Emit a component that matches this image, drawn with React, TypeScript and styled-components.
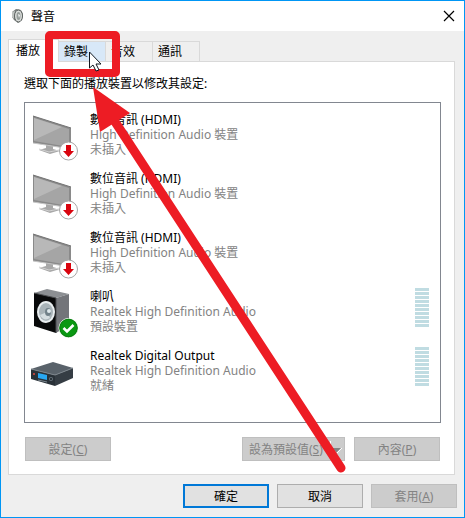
import React from "react";
import styled, { createGlobalStyle, css } from "styled-components";

const GlobalStyle = createGlobalStyle`
  * { box-sizing: border-box; }
  body { margin: 0; background: #efefef; }
  button { font: inherit; color: inherit; }
`;

const Dialog = styled.div`
  position: relative;
  display: flex;
  flex-direction: column;
  min-height: 100vh;
  border: 1px solid #0096f5;
  background: #efefef;
  color: #000;
  font: 12px/15px "Noto Sans", "Noto Sans CJK TC", sans-serif;
`;

const TitleBar = styled.header`
  display: flex;
  align-items: center;
  gap: 7px;
  height: 30px;
  padding: 0 9px 0 10px;
  background: #fff;
`;

const Title = styled.h1`
  flex: 1;
  margin: 0;
  font-size: 12px;
  font-weight: 400;
`;

const CloseButton = styled.button`
  display: flex;
  padding: 0;
  border: 0;
  background: none;
`;

const Content = styled.main`
  display: flex;
  flex: 1;
  flex-direction: column;
  padding: 8px 9px 0 7px;
`;

const TabList = styled.div`
  display: flex;
  align-items: flex-end;
`;

const Tab = styled.button<{ $active?: boolean; $hover?: boolean }>`
  width: 47px;
  height: 20px;
  padding: 0 0 1px 5px;
  border: 1px solid #d9d9d9;
  border-width: 1px 1px 0 0;
  background: ${(p) => (p.$hover ? "#d8e8f8" : "#efefef")};
  text-align: left;
  ${(p) =>
    p.$active &&
    css`
      z-index: 1;
      width: 51px;
      height: 23px;
      margin-bottom: -1px;
      padding: 0 0 2px 7px;
      border-left-width: 1px;
      background: #fff;
    `}
`;

const Panel = styled.section`
  display: flex;
  flex: 1;
  flex-direction: column;
  padding: 14px 13px 13px 15px;
  border: 1px solid #d9d9d9;
  background: #fff;
`;

const Prompt = styled.p`
  margin: 0 0 11px;
`;

const DeviceList = styled.ul`
  flex: 1;
  margin: 0;
  padding: 0 11px 0 5px;
  border: 1px solid #828790;
  list-style: none;
`;

const Device = styled.li`
  display: flex;
  height: 59px;
`;

const DeviceText = styled.div`
  flex: 1;
  padding: 9px 0 0 10px;
  color: #838383;
`;

const DeviceName = styled.div`
  color: #000;
`;

const Meter = styled.div`
  display: flex;
  flex-direction: column;
  gap: 1px;
  width: 14px;
  padding-top: 8px;
`;

const MeterBar = styled.span`
  height: 3px;
  background: #c0dce2;
`;

const Actions = styled.div`
  display: flex;
  gap: 9px;
  padding: 14px 1px 0;
`;

const Footer = styled.footer`
  display: flex;
  justify-content: flex-end;
  gap: 8px;
  padding: 9px 7px;
`;

const Spacer = styled.span`
  flex: 1;
`;

const Button = styled.button<{ $primary?: boolean }>`
  display: flex;
  align-items: center;
  justify-content: center;
  width: 86px;
  height: 24px;
  padding: 0;
  border: ${(p) => (p.$primary ? "2px solid #0078d7" : "1px solid #adadad")};
  background: #e1e1e1;
  &:disabled {
    border-color: #bfbfbf;
    background: #cccccc;
    color: #838383;
  }
`;

const SplitButton = styled(Button)`
  width: 103px;
  justify-content: space-between;
  padding: 0 1px 0 6px;
`;

const Annotation = styled.svg`
  position: absolute;
  z-index: 2;
  top: -1px;
  left: -1px;
  pointer-events: none;
`;

type Kind = "tv" | "speaker" | "receiver";

const TvShape = () => (
  <>
    <path d="M16 41L23 43 23 46 30 48 20 51 9 47 16 45Z" fill="#a8a8a8" />
    <path d="M9 46L19 49 29 47" fill="none" stroke="#d2d2d2" />
    <path d="M3 13L41 25V46L3 40Z" fill="#8a8a8a" />
    <path d="M4 15L39 26V44L4 38Z" fill="#a5a5a5" />
    <path d="M4 15L32 24 4 37Z" fill="#b8b8b8" />
    <path d="M3 13L41 25" stroke="#737373" />
    <path d="M3 40L41 46" stroke="#c6c6c6" />
  </>
);

const SpeakerShape = () => (
  <>
    <path d="M4 13L17 9 39 14 26 18Z" fill="#8c8f93" />
    <path d="M26 18L39 14V45L26 53Z" fill="#73757a" />
    <path d="M4 13L26 18V53L4 46Z" fill="#08090a" />
    <path d="M4 13L26 18V53" fill="none" stroke="#494b4e" />
    <ellipse cx="16" cy="32" rx="9" ry="11" fill="#e8edef" />
    <ellipse cx="16" cy="32" rx="7" ry="9" fill="#a9b4b9" />
    <path d="M10 35Q14 42 20 38L17 32Z" fill="#d5dee1" />
    <ellipse cx="18" cy="32" rx="3" ry="4" fill="#718189" />
    <ellipse cx="19" cy="31" rx="2" ry="2" fill="#dfe9ed" />
  </>
);

const ReceiverShape = () => (
  <>
    <path d="M1 30L23 23 43 29 25 36Z" fill="#59626a" />
    <path d="M25 36L43 29V39L25 47Z" fill="#353d44" />
    <path d="M1 30L25 36V47L1 40Z" fill="#293138" />
    <path d="M1 30L25 36 43 29" fill="none" stroke="#7c858c" />
    <path d="M8 34L17 36V41L8 39Z" fill="#28a7f2" />
    <path d="M8 41L17 43" stroke="#7c878f" />
    <circle cx="4" cy="35" r="1" fill="#e44a40" />
    <circle cx="21" cy="40" r="2" fill="#65717a" />
    <circle cx="21" cy="40" r="1" fill="#182026" />
  </>
);

const DeviceIcon = ({ kind }: { kind: Kind }) => (
  <svg width="50" height="59" viewBox="0 0 50 59" aria-hidden="true">
    {kind === "tv" && <TvShape />}
    {kind === "speaker" && <SpeakerShape />}
    {kind === "receiver" && <ReceiverShape />}
    {kind === "tv" && (
      <>
        <circle cx="38.5" cy="48" r="9" fill="#fff" stroke="#a6a6a6" />
        <path d="M36 42H41V48H44L38.5 54 33 48H36Z" fill="#d9040e" />
      </>
    )}
    {kind === "speaker" && (
      <>
        <circle cx="38.5" cy="48" r="9.5" fill="#0a9812" stroke="#fff" />
        <circle cx="38.5" cy="48" r="8.8" fill="none" stroke="#087e0e" />
        <path d="M33.5 48L37 51.5 43.5 45" fill="none" stroke="#fff" strokeWidth="2.6" />
      </>
    )}
  </svg>
);

const devices: { kind: Kind; name: string; driver: string; status: string; meter?: boolean }[] = [
  { kind: "tv", name: "數位音訊 (HDMI)", driver: "High Definition Audio 裝置", status: "未插入" },
  { kind: "tv", name: "數位音訊 (HDMI)", driver: "High Definition Audio 裝置", status: "未插入" },
  { kind: "tv", name: "數位音訊 (HDMI)", driver: "High Definition Audio 裝置", status: "未插入" },
  { kind: "speaker", name: "喇叭", driver: "Realtek High Definition Audio", status: "預設裝置", meter: true },
  { kind: "receiver", name: "Realtek Digital Output", driver: "Realtek High Definition Audio", status: "就緒", meter: true },
];

export default function App() {
  return (
    <Dialog>
      <GlobalStyle />
      <TitleBar>
        <svg width="13" height="16" viewBox="0 0 13 16" aria-hidden="true">
          <path d="M1 4L5 1 10 2 12 6 11 12 7 15 3 12 1 9Z" fill="#777c7b" />
          <path d="M1 4L4 3 3 11 1 9Z" fill="#bec2c0" />
          <ellipse cx="7.5" cy="8" rx="4" ry="6" fill="#d9dcda" stroke="#5c6260" />
          <ellipse cx="7.5" cy="8" rx="2" ry="4" fill="#969e9b" />
          <path d="M7 6L9 7 8 10Z" fill="#f5f5f5" />
        </svg>
        <Title>聲音</Title>
        <CloseButton aria-label="關閉">
          <svg width="12" height="12" viewBox="0 0 12 12">
            <path d="M1 1L11 11M11 1L1 11" stroke="#000" strokeWidth="1.2" />
          </svg>
        </CloseButton>
      </TitleBar>
      <Content>
        <TabList role="tablist">
          <Tab role="tab" aria-selected="true" $active>播放</Tab>
          <Tab role="tab" aria-selected="false" $hover>錄製</Tab>
          <Tab role="tab" aria-selected="false">音效</Tab>
          <Tab role="tab" aria-selected="false">通訊</Tab>
        </TabList>
        <Panel role="tabpanel">
          <Prompt>選取下面的播放裝置以修改其設定:</Prompt>
          <DeviceList>
            {devices.map((d, i) => (
              <Device key={i}>
                <DeviceIcon kind={d.kind} />
                <DeviceText>
                  <DeviceName>{d.name}</DeviceName>
                  <div>{d.driver}</div>
                  <div>{d.status}</div>
                </DeviceText>
                {d.meter && (
                  <Meter>
                    {Array.from({ length: 10 }, (_, n) => <MeterBar key={n} />)}
                  </Meter>
                )}
              </Device>
            ))}
          </DeviceList>
          <Actions>
            <Button disabled><span>設定(<u>C</u>)</span></Button>
            <Spacer />
            <SplitButton disabled>
              <span>設為預設值(<u>S</u>)</span>
              <svg width="14" height="20" viewBox="0 0 14 20" aria-hidden="true">
                <path d="M1.5 2V18" stroke="#fff" />
                <path d="M8 14L13 9" stroke="#fff" />
                <path d="M3 9H12L7.5 13.5Z" fill="#838383" />
              </svg>
            </SplitButton>
            <Button disabled><span>內容(<u>P</u>)</span></Button>
          </Actions>
        </Panel>
      </Content>
      <Footer>
        <Button $primary>確定</Button>
        <Button>取消</Button>
        <Button disabled><span>套用(<u>A</u>)</span></Button>
      </Footer>
      <Annotation width="360" height="480" viewBox="0 0 360 480" aria-hidden="true">
        <rect x="49" y="35" width="67" height="38" rx="1" fill="none" stroke="#ed1c24" strokeWidth="8" strokeLinejoin="round" />
        <path d="M110 114L341 468" stroke="#ed1c24" strokeWidth="9" strokeLinecap="round" />
        <path d="M93 87L100 132 130 113Z" fill="#ed1c24" />
        <path d="M89.5 52V68L93 65 96 71 99 70 96 64H101Z" fill="#fff" stroke="#111820" />
      </Annotation>
    </Dialog>
  );
}
